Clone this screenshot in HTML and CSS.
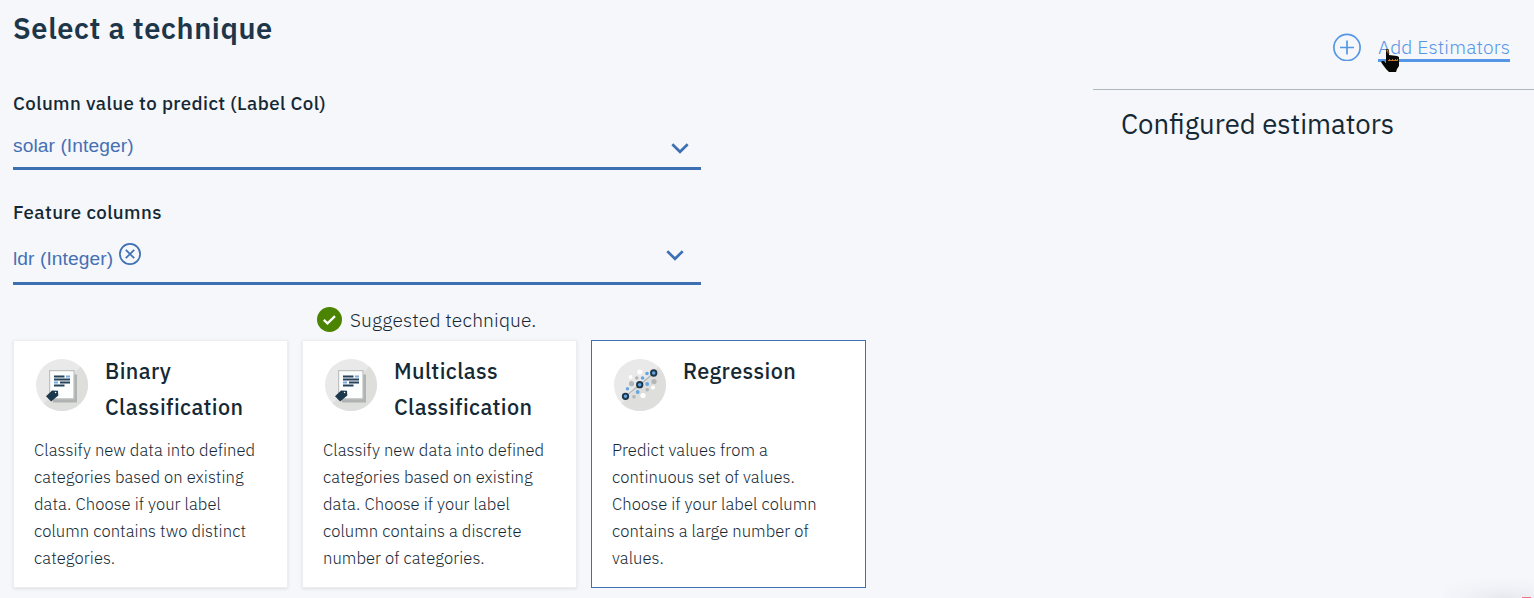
FILE: index.html
```html
<!DOCTYPE html>
<html lang="en">
<head>
<meta charset="utf-8">
<title>Select a technique</title>
<link rel="stylesheet" href="styles.css">
</head>
<body>
<div class="page">
  <main class="main">
    <h1 class="title"><span>Select a technique</span></h1>
    <label class="label label-predict"><span>Column value to predict (Label Col)</span></label>
    <div class="select select-predict">
      <span class="value">solar (Integer)</span>
      <svg class="chevron" width="18" height="11" viewBox="0 0 18 11"><path d="M1.3 1.2 9 8.8l7.7-7.6"/></svg>
    </div>
    <label class="label label-features"><span>Feature columns</span></label>
    <div class="select select-features">
      <span class="value">ldr (Integer)</span>
      <svg class="remove" width="22" height="22" viewBox="0 0 22 22"><circle cx="11" cy="11" r="10.1"/><path d="m6.8 6.8 8.4 8.4m0-8.4-8.4 8.4"/></svg>
      <svg class="chevron" width="18" height="11" viewBox="0 0 18 11"><path d="M1.3 1.2 9 8.8l7.7-7.6"/></svg>
    </div>
    <div class="suggested">
      <svg width="25" height="25" viewBox="0 0 25 25"><circle cx="12.5" cy="12.5" r="12.5" fill="#4b8400"/><path d="m6.8 12.8 3.7 3.5 7.5-7.2" fill="none" stroke="#fff" stroke-width="2.3"/></svg>
      <span>Suggested technique.</span>
    </div>
    <div class="cards">
      <section class="card">
        <div class="card-head">
          <svg class="card-icon" width="52" height="52" viewBox="0 0 52 52"><use href="#doc"/></svg>
          <h2>Binary<br>Classification</h2>
        </div>
        <p>Classify new data into defined<br>categories based on existing<br>data. Choose if your label<br>column contains two distinct<br>categories.</p>
      </section>
      <section class="card">
        <div class="card-head">
          <svg class="card-icon" width="52" height="52" viewBox="0 0 52 52"><use href="#doc"/></svg>
          <h2>Multiclass<br>Classification</h2>
        </div>
        <p>Classify new data into defined<br>categories based on existing<br>data. Choose if your label<br>column contains a discrete<br>number of categories.</p>
      </section>
      <section class="card card-selected">
        <div class="card-head">
          <svg class="card-icon" width="52" height="52" viewBox="0 0 52 52">
            <circle cx="26" cy="26" r="26" fill="#e9e9e9"/><path d="M44.4 7.6A26 26 0 0 1 7.6 44.4Z" fill="#dededd"/>
            <path d="M12 37 40 14" stroke="#b5b8b8" stroke-width="1.5"/>
            <g fill="#fff"><circle cx="25.800" cy="13" r="2.600"/><circle cx="16.600" cy="18" r="1.900"/><circle cx="39" cy="28.500" r="1.900"/><circle cx="29" cy="36.500" r="2.600"/></g>
            <g fill="#b3b7b7"><circle cx="17.500" cy="24.700" r="2.600"/><circle cx="22.800" cy="19" r="1.800"/><circle cx="40" cy="22.500" r="2.600"/><circle cx="33.200" cy="30.800" r="1.800"/><circle cx="20" cy="37.800" r="1.800"/></g>
            <g fill="#64a5e2"><circle cx="33" cy="14.500" r="1.800"/><circle cx="28.600" cy="19" r="1.800"/><circle cx="33.200" cy="25" r="1.900"/><circle cx="13.500" cy="29.700" r="1.700"/><circle cx="23.700" cy="33" r="1.900"/></g>
            <g fill="#64a5e2" stroke="#1d3649" stroke-width="1.900"><circle cx="39.700" cy="14" r="2.700"/><circle cx="25.700" cy="25.700" r="2.700"/><circle cx="11.500" cy="37.300" r="2.700"/></g>
          </svg>
          <h2>Regression</h2>
        </div>
        <p>Predict values from a<br>continuous set of values.<br>Choose if your label column<br>contains a large number of<br>values.</p>
      </section>
    </div>
  </main>
  <aside class="side">
    <div class="actions">
      <svg class="plus" width="28" height="28" viewBox="0 0 28 28"><circle cx="14" cy="14.500" r="13.100"/><path d="M7 14.500h14M14 7.500v14"/></svg>
      <a class="add">Add Estimators
        <svg class="cursor" width="19" height="25" viewBox="0 0 19 25"><path d="M6 1h2l1 1v5l8 1 2 1v9l-2 3-1 3H9l-3-3-3-4-2-3 1-1h2l2 2Z" fill="#080806"/><path d="M6.500 1.500H8.500v4H7.500v-2h-1zM8 13h10v-2h-1v1h-1v-1h-1v1h-2v-1h-1v1h-2v-1H9v1H8z" fill="#c47822"/></svg>
      </a>
    </div>
    <h2 class="configured"><span>Configured estimators</span></h2>
  </aside>
</div>
<div class="launcher-shadow"><i class="launcher-edge"></i></div>
<svg class="defs" width="0" height="0">
  <symbol id="doc" viewBox="0 0 52 52">
    <circle cx="26" cy="26" r="26" fill="#e9e9e9"/><path d="M44.400 7.600A26 26 0 0 1 7.600 44.400Z" fill="#dededd"/>
    <path d="M17 15.500h24v28H17z" fill="#b1b3b3"/>
    <path d="M13.600 11.600H38v28.300H13.600z" fill="#fcfdfd" stroke="#bfc1c1" stroke-width="1.200"/>
    <path d="M18 17.500h10.500M18 20.500h16M24 23.500h10M18 26.500h10.500" stroke="#24435a" stroke-width="1.800"/>
    <path d="M30 17.500h4M18 23.500h4" stroke="#75aae2" stroke-width="1.800"/>
    <path d="m10 37.200 6-5.700 6 .2.300 4.700-7.100 6.100Z" fill="#1c384d"/><circle cx="19.600" cy="33.500" r=".8" fill="#fff"/>
  </symbol>
</svg>
</body>
</html>
```
FILE: styles.css
```css
* { box-sizing: border-box; }
body { margin: 0; height: 598px; overflow: hidden; background: #f5f7fb; color: #152935; font-family: "IBM Plex Sans", Roboto, "Noto Sans", sans-serif; }
h1, h2, p { margin: 0; white-space: nowrap; }
.page { display: flex; justify-content: space-between; height: 598px; }
.main { width: 866px; padding-left: 13px; display: flex; flex-direction: column; }
.title { height: 89px; padding-top: 8px; font-size: 29px; line-height: 40px; font-weight: 600; color: #1d3649; letter-spacing: .62px; }
.label { display: block; font-size: 18.700px; line-height: 28px; font-weight: 500; letter-spacing: .4px; }
.label-predict { height: 37px; }
.label-features { margin-top: 28px; height: 38px; }
.select { width: 688px; display: flex; border-bottom: 3px solid #3d70b2; color: #4670b3; font-family: "Liberation Sans", Arial, sans-serif; font-size: 19.200px; line-height: 24px; letter-spacing: .08px; }
.select-predict { height: 44px; padding: 8px 12px 0 0; }
.select-features { height: 49px; padding: 7px 17px 0 0; }
.select-features .value { padding-top: 4px; }
.chevron { margin: 9px 0 0 auto; fill: none; stroke: #3d70b2; stroke-width: 2.600; }
.select-features .chevron { margin-top: 7px; }
.remove { margin: 0 0 0 6px; fill: none; stroke: #3d70b2; stroke-width: 1.700; }
.suggested { height: 55px; padding: 22px 0 0 304px; display: flex; gap: 8px; font-size: 19.200px; line-height: 26px; font-weight: 300; letter-spacing: .17px; }
.cards { display: flex; gap: 14px; }
.card { width: 275px; height: 248px; padding: 12px 20px; border: 1px solid #eceef2; background: #fff; box-shadow: 0 1px 3px rgba(0,0,0,.1); }
.card-selected { border-color: #3d70b2; box-shadow: none; }
.card-head { display: flex; height: 84px; }
.card-icon { margin: 6px 17px 0 2px; }
.card h2 { font-size: 21.600px; line-height: 36px; font-weight: 500; letter-spacing: .4px; }
.card p { font-size: 16.600px; line-height: 27px; font-weight: 300; letter-spacing: .07px; }
.side { width: 441px; }
.actions { height: 90px; border-bottom: 1px solid #aeb8bd; display: flex; justify-content: flex-end; padding: 33px 24px 0 0; gap: 17px; }
.plus { fill: none; stroke: #5596e6; stroke-width: 1.700; }
.add { position: relative; width: 132px; height: 29px; border-bottom: 3px solid #5596e6; color: #5596e6; font-size: 19.200px; line-height: 28px; font-weight: 300; letter-spacing: .18px; white-space: nowrap; }
.cursor { position: absolute; left: 2px; top: 15px; }
.configured { padding: 14px 0 0 28px; font-size: 27.500px; line-height: 40px; font-weight: 400; }
.launcher-shadow { position: absolute; right: 0; bottom: 0; width: 90px; height: 22px; background: radial-gradient(ellipse 75px 22px at 60px 22px, rgba(40,45,60,.07), rgba(40,45,60,.02) 55%, transparent); }
.launcher-edge { position: absolute; right: 3px; bottom: 0; width: 9px; height: 1px; background: #ec7389; }
.defs { position: absolute; }
```
